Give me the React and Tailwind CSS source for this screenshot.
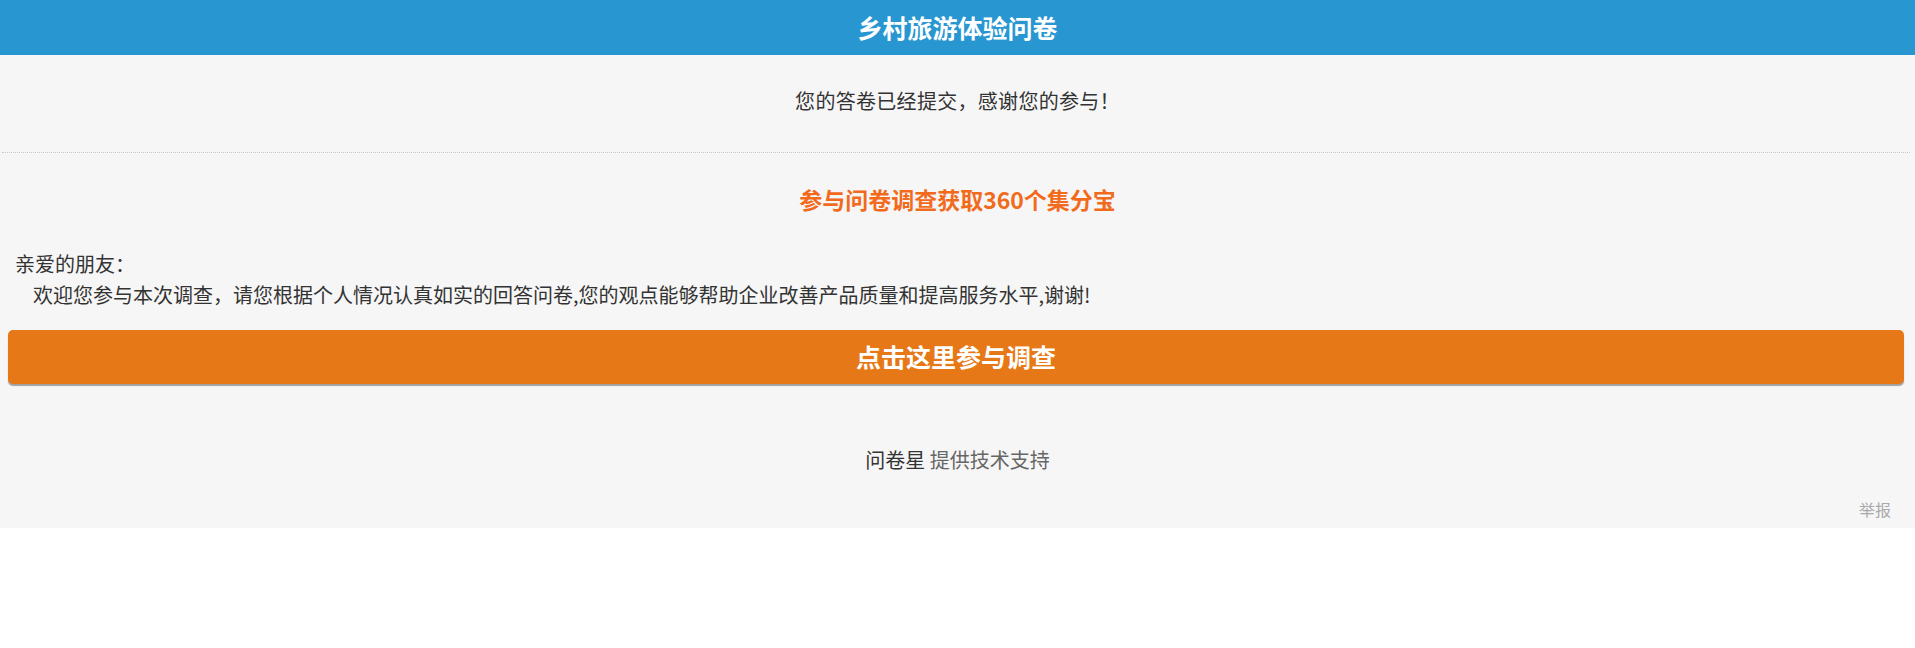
import React from 'react';

const font = { fontFamily: '"Noto Sans CJK SC", "Noto Sans", sans-serif' };

export default function App() {
  return (
    <div className="w-full min-h-[648px] bg-white" style={font}>
      {/* Header */}
      <div className="h-[55px] bg-[#2796d1] flex items-center justify-center">
        <h1 className="text-[25px] font-bold text-white leading-none">乡村旅游体验问卷</h1>
      </div>

      <div className="bg-[#f6f6f6]">
        {/* Submitted notice */}
        <div className="pt-[31px] pb-[36px] text-center text-[20px] leading-[30px] text-[#333] tracking-[0.3px]">
          您的答卷已经提交，感谢您的参与！
        </div>

        <div className="ml-[2px] mr-[5px] border-t border-dotted border-[#c8c8c8]"></div>

        {/* Reward */}
        <div className="pt-[31px] text-center text-[23px] leading-[30px] font-bold text-[#f26b1d]">
          参与问卷调查获取360个集分宝
        </div>

        {/* Intro */}
        <div className="mt-[34px] px-[15px] text-[20px] leading-[31px] text-[#333]">
          <p>亲爱的朋友：</p>
          <p className="pl-[18px]">
            欢迎您参与本次调查，请您根据个人情况认真如实的回答问卷,您的观点能够帮助企业改善产品质量和提高服务水平,谢谢!
          </p>
        </div>

        {/* Start button */}
        <div className="mt-[20px] ml-[8px] mr-[11px]">
          <button className="w-full h-[54px] rounded-[5px] bg-[#e77817] text-white text-[25px] font-bold shadow-[0_2px_1px_rgba(0,0,0,0.35)] flex items-center justify-center">
            点击这里参与调查
          </button>
        </div>

        {/* Footer */}
        <div className="mt-[61px] text-center text-[20px] leading-[30px]">
          <span className="text-[#333]">问卷星</span>
          <span className="text-[#666]"> 提供技术支持</span>
        </div>

        <div className="mt-[22px] pb-[7px] pr-[24px] flex justify-end">
          <span className="text-[16px] leading-[24px] text-[#aaa]">举报</span>
        </div>
      </div>
    </div>
  );
}
